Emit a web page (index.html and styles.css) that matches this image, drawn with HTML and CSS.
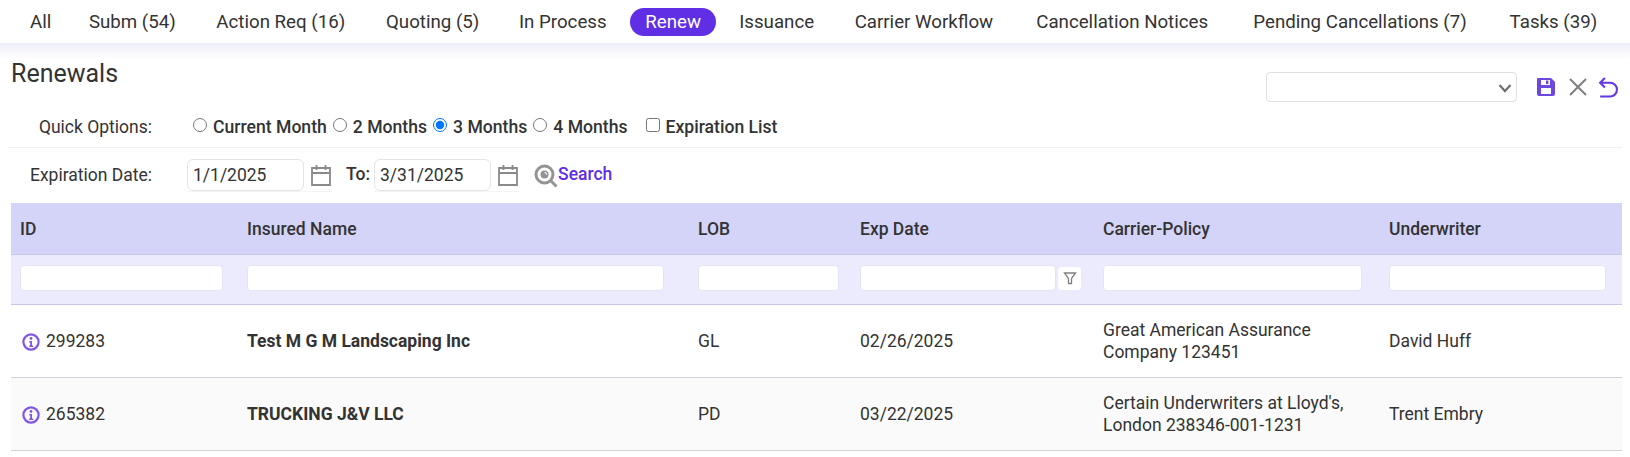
FILE: index.html
```html
<!DOCTYPE html>
<html lang="en">
<head>
<meta charset="utf-8">
<title>Renewals</title>
<link rel="stylesheet" href="styles.css">
</head>
<body>
<div class="tabs-bar">
  <nav class="tabs">
    <a class="tab">All</a>
    <a class="tab">Subm (54)</a>
    <a class="tab">Action Req (16)</a>
    <a class="tab">Quoting (5)</a>
    <a class="tab">In Process</a>
    <a class="tab"><span class="pill">Renew</span></a>
    <a class="tab">Issuance</a>
    <a class="tab">Carrier Workflow</a>
    <a class="tab">Cancellation Notices</a>
    <a class="tab">Pending Cancellations (7)</a>
    <a class="tab">Tasks (39)</a>
  </nav>
</div>
<div class="fade"></div>
<main class="content">
  <div class="title-row">
    <h1 class="title">Renewals</h1>
    <div class="actions">
      <span class="select-wrap">
        <select class="view-select"><option></option></select>
        <svg class="icon-chevron" viewBox="0 0 14 10"><path d="M1.500 2l5.500 6 5.500-6" stroke="#707070" stroke-width="2.200" fill="none"/></svg>
      </span>
      <svg class="icon-save" viewBox="0 0 20 20"><path fill="#6d48e0" fill-rule="evenodd" d="M2 1h13l4 4v12a2 2 0 0 1-2 2H3a2 2 0 0 1-2-2V2a1 1 0 0 1 1-1zm3 2v5h9V3zm0 8v6h10v-6z"/><rect x="10" y="3.5" width="2.4" height="3.5" fill="#6d48e0"/></svg>
      <svg class="icon-x" viewBox="0 0 20 20"><path d="M2 2l16 16M18 2L2 18" stroke="#7f7f7f" stroke-width="2" fill="none"/></svg>
      <svg class="icon-undo" viewBox="0 0 20 20"><path d="M7.500 1L3 5.500l4.500 4.500M3 5.500h9.500a6.500 6.500 0 0 1 0 13H3" stroke="#6137e6" stroke-width="2" fill="none"/></svg>
    </div>
  </div>
  <div class="quick-row">
    <span class="field-label">Quick Options:</span>
    <div class="opts">
      <label class="opt"><input type="radio" name="q">Current Month</label>
      <label class="opt"><input type="radio" name="q">2 Months</label>
      <label class="opt"><input type="radio" name="q" checked>3 Months</label>
      <label class="opt"><input type="radio" name="q">4 Months</label>
      <label class="opt opt-check"><input type="checkbox">Expiration List</label>
    </div>
  </div>
  <div class="date-row">
    <span class="field-label">Expiration Date:</span>
    <span class="date-wrap date-first">
      <input class="date-input" value="1/1/2025">
      <svg class="icon-cal" viewBox="0 0 22 22"><path d="M2 4h18v17H2zM2 9h18M6.500 1v5M15.500 1v5" stroke="#8a8a8a" stroke-width="1.800" fill="none"/></svg>
    </span>
    <b class="to">To:</b>
    <span class="date-wrap">
      <input class="date-input" value="3/31/2025">
      <svg class="icon-cal" viewBox="0 0 22 22"><path d="M2 4h18v17H2zM2 9h18M6.500 1v5M15.500 1v5" stroke="#8a8a8a" stroke-width="1.800" fill="none"/></svg>
    </span>
    <a class="search">
      <svg class="icon-search" viewBox="0 0 24 24"><circle cx="10.500" cy="10.500" r="8.500" stroke="#949494" stroke-width="3" fill="none"/><circle cx="10.500" cy="10.500" r="4" fill="#949494"/><path d="M10.500 8.500a2 2 0 0 1 2 2" stroke="#fff" stroke-width="1.200" fill="none"/><path d="M16.500 16.500l6 6" stroke="#949494" stroke-width="3"/></svg>Search
    </a>
  </div>
  <table class="grid">
    <colgroup>
      <col class="c1"><col class="c2"><col class="c3"><col class="c4"><col class="c5"><col class="c6">
    </colgroup>
    <thead>
      <tr class="head">
        <th>ID</th><th>Insured Name</th><th>LOB</th><th>Exp Date</th><th>Carrier-Policy</th><th>Underwriter</th>
      </tr>
      <tr class="filters">
        <td class="f1"><input class="filter"></td>
        <td class="f2"><input class="filter"></td>
        <td class="f3"><input class="filter"></td>
        <td class="f4">
          <div class="filter-btn-wrap">
            <input class="filter">
            <span class="filter-btn"><svg class="icon-funnel" viewBox="0 0 14 14"><path d="M1.500 2h11L8.500 7.500V12.500h-3V7.500z" stroke="#808080" stroke-width="1.300" fill="none"/></svg></span>
          </div>
        </td>
        <td class="f5"><input class="filter"></td>
        <td class="f6"><input class="filter"></td>
      </tr>
    </thead>
    <tbody>
      <tr>
        <td><span class="id-cell"><svg class="icon-info" viewBox="0 0 18 18"><circle cx="9" cy="9" r="7.600" stroke="#7f56e8" stroke-width="2.200" fill="none"/><circle cx="9" cy="5.500" r="1.400" fill="#7f56e8"/><path d="M7.300 8h2.700v4.500h1.200V14H7.200v-1.500h1V9.400h-.9z" fill="#7f56e8"/></svg>299283</span></td>
        <td><b>Test M G M Landscaping Inc</b></td>
        <td>GL</td>
        <td>02/26/2025</td>
        <td>Great American Assurance Company 123451</td>
        <td>David Huff</td>
      </tr>
      <tr class="alt">
        <td><span class="id-cell"><svg class="icon-info" viewBox="0 0 18 18"><circle cx="9" cy="9" r="7.600" stroke="#7f56e8" stroke-width="2.200" fill="none"/><circle cx="9" cy="5.500" r="1.400" fill="#7f56e8"/><path d="M7.300 8h2.700v4.500h1.200V14H7.200v-1.500h1V9.400h-.9z" fill="#7f56e8"/></svg>265382</span></td>
        <td><b>TRUCKING J&amp;V LLC</b></td>
        <td>PD</td>
        <td>03/22/2025</td>
        <td>Certain Underwriters at Lloyd's, London 238346-001-1231</td>
        <td>Trent Embry</td>
      </tr>
    </tbody>
  </table>
</main>
</body>
</html>
```
FILE: styles.css
```css
* { box-sizing: border-box; }
html, body { margin: 0; padding: 0; background: #fff; }
body { font-family: Roboto, "Liberation Sans", sans-serif; font-size: 17.5px; color: #333; overflow: hidden; }

.tabs-bar { height: 43px; padding: 8px 13px 0 12px; background: #fff; }
.tabs { display: table; width: 100%; }
.tab { display: table-cell; height: 28px; line-height: 28px; padding: 0 16.500px; text-align: center; color: #333; white-space: nowrap; font-size: 18.700px; }
.pill { display: inline-block; height: 28px; padding: 0 15px; margin: 0 -15px; border-radius: 14px; background: #5f2ee5; color: #fff; }
.fade { height: 17px; background: linear-gradient(#eeeefa, #fff); }

.content { padding: 0 8px; }
.title-row { height: 45px; display: flex; justify-content: space-between; padding-left: 3px; }
.title { margin: 0; font-weight: 400; font-size: 25px; line-height: 28px; color: #333; }
.actions { display: flex; align-items: center; padding-top: 12px; padding-right: 4px; height: 42px; }
.select-wrap { position: relative; display: block; height: 30px; }
.view-select { display: block; width: 251px; height: 30px; border: 1px solid #e0e0e0; border-radius: 4px; background: #fff; color: #555; appearance: none; }
.icon-chevron { position: absolute; right: 5px; top: 11px; width: 14px; height: 10px; }
.icon-save { width: 20px; height: 20px; margin-left: 19px; }
.icon-x { width: 20px; height: 20px; margin-left: 12px; }
.icon-undo { width: 21px; height: 21px; margin-left: 9px; }

.quick-row { height: 43px; display: flex; align-items: center; border-bottom: 1px solid #f0f0f0; padding-top: 1px; }
.field-label { width: 144px; text-align: right; flex: none; color: #333; }
.opts { display: flex; align-items: center; margin-left: 41px; gap: 6px; }
.opt { display: flex; align-items: center; font-weight: 500; font-size: 17.600px; color: #333; white-space: nowrap; }
.opt input { margin: 0 6px 3px 0; width: 14px; height: 14px; }
.opt-check { margin-left: 12px; }

.date-row { height: 55px; display: flex; align-items: flex-start; padding-top: 11px; }
.date-row .field-label { line-height: 32px; }
.date-wrap { display: flex; align-items: center; gap: 6px; border-bottom: 1px solid #f4f4f4; }
.date-first { margin-left: 35px; }
.date-input { width: 117px; height: 32px; border: 1px solid #e4e4e4; border-radius: 6px; padding: 0 5px; font: 17.500px Roboto, sans-serif; color: #333; }
.icon-cal { width: 22px; height: 22px; }
.to { margin: 0 4px 0 14px; line-height: 30px; font-weight: 500; }
.search { display: flex; align-items: center; margin-left: 15px; color: #5f2ee5; font-weight: 500; height: 30px; }
.icon-search { width: 24px; height: 24px; margin-top: 3px; }

.grid { width: 1611px; margin-left: 3px; border-collapse: collapse; table-layout: fixed; }
.c1 { width: 227px; } .c2 { width: 451px; } .c3 { width: 162px; } .c4 { width: 243px; } .c5 { width: 286px; } .c6 { width: 242px; }
.grid th, .grid td { padding: 0 9px; text-align: left; font-size: 17.500px; }
.head { height: 51px; background: #d4d4f9; }
.grid .head th { font-weight: 500; color: #333; border-bottom: 1px solid #c9c9ec; padding-top: 2px; }
.filters { height: 50px; background: #ebebfd; }
.grid .filters td { border-bottom: 1px solid #c6c6e6; padding-bottom: 2px; }
.grid .f1 { padding-right: 15px; }
.grid .f2 { padding-right: 25px; }
.grid .f3 { padding-right: 12px; }
.grid .f4 { padding-right: 13px; }
.grid .f5 { padding-right: 18px; }
.grid .f6 { padding-right: 16px; }
.filter { display: block; width: 100%; height: 26px; border: 1px solid #e4e4f4; border-radius: 4px; background: #fff; }
.filter-btn-wrap { display: flex; gap: 2px; align-items: center; }
.filter-btn { flex: none; width: 23px; height: 23px; background: #fff; border-radius: 4px; display: flex; align-items: center; justify-content: center; }
.icon-funnel { width: 14px; height: 14px; }
.grid tbody tr { height: 73px; }
.grid tbody td { border-bottom: 1px solid #d0d0d8; padding-top: 1px; line-height: 22px; color: #333; }
.grid tbody td b { font-weight: 700; }
.alt { background: #fafafa; }
.id-cell { display: flex; align-items: center; gap: 6px; padding-left: 2px; margin-top: -1px; }
.icon-info { width: 18px; height: 18px; margin-top: 2px; }
```
